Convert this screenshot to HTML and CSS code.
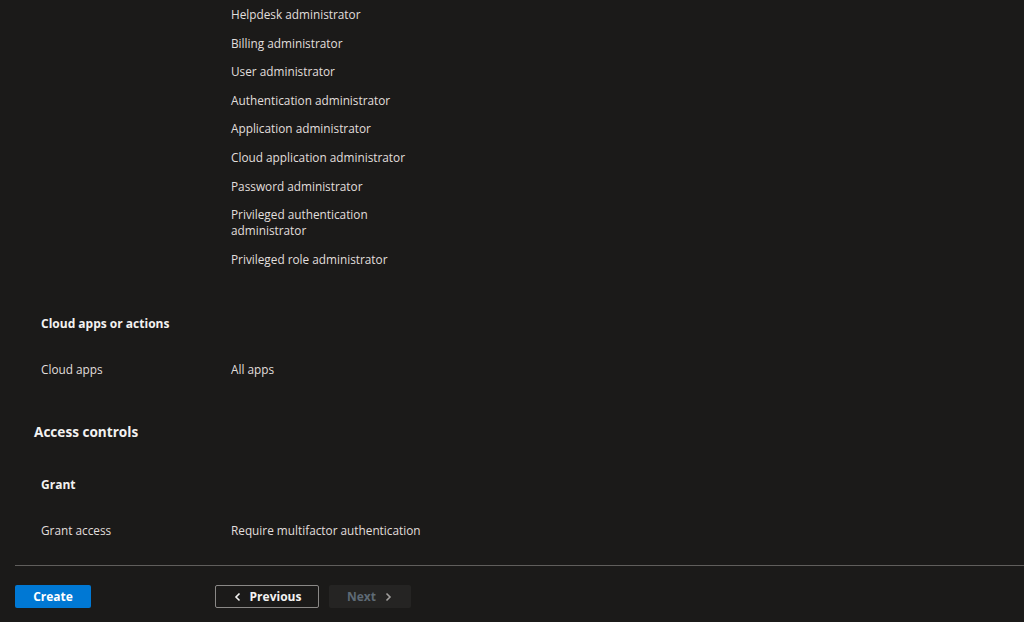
FILE: index.html
```html
<!DOCTYPE html>
<html lang="en">
<head>
  <meta charset="UTF-8">
  <title>Review + create</title>
  <link rel="stylesheet" href="styles.css">
</head>
<body>
  <div class="summary">
    <div class="group">
      <div class="row">
        <div class="label"></div>
        <ul class="values">
          <li>Helpdesk administrator</li>
          <li>Billing administrator</li>
          <li>User administrator</li>
          <li>Authentication administrator</li>
          <li>Application administrator</li>
          <li>Cloud application administrator</li>
          <li>Password administrator</li>
          <li>Privileged authentication administrator</li>
          <li>Privileged role administrator</li>
        </ul>
      </div>
    </div>

    <div class="group apps">
      <h3>Cloud apps or actions</h3>
      <div class="row">
        <div class="label">Cloud apps</div>
        <div class="value">All apps</div>
      </div>
    </div>

    <h2>Access controls</h2>

    <div class="group grant">
      <h3>Grant</h3>
      <div class="row">
        <div class="label">Grant access</div>
        <div class="value">Require multifactor authentication</div>
      </div>
    </div>
  </div>

  <div class="footer">
    <button class="btn primary">Create</button>
    <div class="nav">
      <button class="btn outline">
        <svg width="10" height="10" viewBox="0 0 10 10"><path d="M6.5 1.5 3 5l3.5 3.5" fill="none" stroke="currentColor" stroke-width="1.6"/></svg>
        Previous
      </button>
      <button class="btn disabled">
        Next
        <svg width="10" height="10" viewBox="0 0 10 10"><path d="M3.5 1.5 7 5 3.5 8.5" fill="none" stroke="currentColor" stroke-width="1.6"/></svg>
      </button>
    </div>
  </div>
</body>
</html>
```

FILE: styles.css
```css
body {
  margin: 0;
  background-color: #1b1a19;
  color: #e1dfdd;
  font-family: "Open Sans", "Noto Sans", sans-serif;
  font-size: 11.8px;
  line-height: 16px;
}
.summary {
  padding: 6px 0 0 34px;
  height: 565px;
  box-sizing: border-box;
}
.group {
  padding-left: 7px;
}
.row {
  display: grid;
  grid-template-columns: 190px 200px;
}
.values {
  list-style: none;
  margin: 0;
  padding: 0;
  display: flex;
  flex-direction: column;
  gap: 12.6px;
}
h3 {
  margin: 0 0 29px;
  font-size: 12px;
  font-weight: 700;
  color: #f3f2f1;
}
h2 {
  margin: 45px 0 0;
  font-size: 13.6px;
  line-height: 20px;
  font-weight: 700;
  color: #f3f2f1;
}
.apps {
  margin-top: 49px;
}
.grant {
  margin-top: 35px;
}
.footer {
  margin-left: 15px;
  border-top: 1px solid #605e5c;
  padding-top: 19px;
  display: flex;
}
.btn {
  height: 23px;
  font-family: inherit;
  font-size: 12px;
  font-weight: 700;
  border-radius: 2px;
  display: flex;
  align-items: center;
  justify-content: center;
  gap: 7px;
  padding: 0;
}
.primary {
  width: 76px;
  background-color: #0078d4;
  color: #fff;
  border: none;
}
.nav {
  display: flex;
  gap: 10px;
  margin-left: 124px;
}
.outline {
  width: 104px;
  background: transparent;
  color: #f3f2f1;
  border: 1px solid #8a8886;
}
.disabled {
  width: 82px;
  background-color: #252423;
  color: #5e6a75;
  border: none;
}
.disabled svg {
  color: #a19f9d;
}
```
